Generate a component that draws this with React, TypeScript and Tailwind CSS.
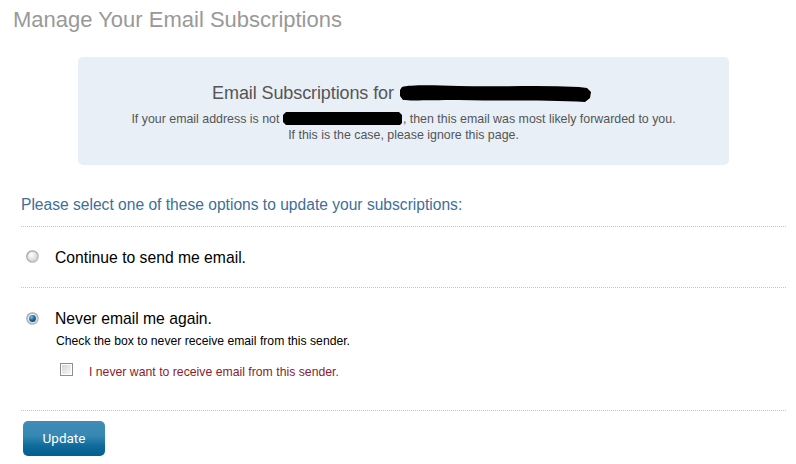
import React from "react";

function Radio({ checked }: { checked?: boolean }) {
  return (
    <svg width="13" height="13" viewBox="0 0 13 13" className="shrink-0">
      <defs>
        <linearGradient id={checked ? "rgc" : "rgu"} x1="0" y1="0" x2="1" y2="1">
          <stop offset="0" stopColor="#949494" />
          <stop offset="1" stopColor="#c4c4c4" />
        </linearGradient>
        <radialGradient id="rin" cx="0.4" cy="0.35" r="0.7">
          <stop offset="0" stopColor="#ffffff" />
          <stop offset="1" stopColor="#cfcfcf" />
        </radialGradient>
        <radialGradient id="rdot" cx="0.35" cy="0.3" r="0.8">
          <stop offset="0" stopColor="#7fc0ea" />
          <stop offset="0.5" stopColor="#1d6fa7" />
          <stop offset="1" stopColor="#0c3f66" />
        </radialGradient>
      </defs>
      <circle cx="6.5" cy="6.5" r="6.3" fill={checked ? "url(#rgc)" : "url(#rgu)"} />
      <circle cx="6.5" cy="6.5" r="5.1" fill="url(#rin)" />
      {checked && <circle cx="6.5" cy="6.5" r="3.4" fill="url(#rdot)" />}
    </svg>
  );
}

function Checkbox() {
  return (
    <svg width="13" height="13" viewBox="0 0 13 13" className="shrink-0">
      <defs>
        <linearGradient id="cbg" x1="0" y1="0" x2="1" y2="1">
          <stop offset="0" stopColor="#d6d6d6" />
          <stop offset="1" stopColor="#f8f8f8" />
        </linearGradient>
      </defs>
      <rect x="0.5" y="0.5" width="12" height="12" fill="#ffffff" stroke="#8e8f8f" />
      <rect x="2" y="2" width="9" height="9" fill="url(#cbg)" />
    </svg>
  );
}

export default function App() {
  return (
    <div className="w-[796px] h-[464px] bg-white font-['Liberation_Sans',Arial,sans-serif] overflow-hidden">
      <h1 className="pl-[13px] pt-[7px] text-[22px] leading-[26px] text-[#999999] font-normal">
        Manage Your Email Subscriptions
      </h1>
      <div className="ml-[21px] mr-[10px]">
        <div className="mx-[57px] mt-[24px] h-[108px] rounded-[5px] bg-[#e8eff7] pt-[24px] text-center text-[#555555]">
          <div className="text-[18px] leading-[22px] flex justify-center items-center">
            <span className="tracking-[-0.1px]">Email Subscriptions for</span>
            <svg width="196" height="20" viewBox="0 0 196 20" className="ml-[5px] mt-[3px]">
              <path
                d="M3 3 C10 1 30 1 60 2 C100 3 140 1 180 3 L188 4 L192 8 L191 14 L186 18 C150 16 100 17 60 16 C30 16 12 17 4 16 L1 12 L1 6 Z"
                fill="#000"
              />
            </svg>
          </div>
          <div className="mt-[7px] text-[12.4px] leading-[16px]">
            <div className="flex justify-center items-center">
              <span className="whitespace-pre">If your email address is not </span>
              <svg width="120" height="15" viewBox="0 0 120 15" className="mt-[-2px]">
                <path d="M3 1 L116 1 L119 4 L119 12 L117 14 L3 14 L0 11 L0 4 Z" fill="#000" />
              </svg>
              <span className="whitespace-pre">, then this email was most likely forwarded to you.</span>
            </div>
            <div>If this is the case, please ignore this page.</div>
          </div>
        </div>

        <div className="mt-[30px] text-[15.6px] leading-[20px] text-[#3d6f98]">
          Please select one of these options to update your subscriptions:
        </div>
        <div className="mt-[11px] border-t border-dotted border-[#c4c4c4]" />

        <div className="mt-[21px] flex items-start pl-[5px]">
          <div className="mt-[2px]">
            <Radio />
          </div>
          <span className="ml-[16px] text-[15.7px] leading-[20px] text-black">Continue to send me email.</span>
        </div>
        <div className="mt-[19px] border-t border-dotted border-[#c4c4c4]" />

        <div className="mt-[21px] flex items-start pl-[5px]">
          <div className="mt-[3px]">
            <Radio checked />
          </div>
          <span className="ml-[16px] text-[15.7px] leading-[20px] text-black">Never email me again.</span>
        </div>
        <div className="mt-[4px] pl-[35px] text-[12.2px] leading-[16px] text-black">
          Check the box to never receive email from this sender.
        </div>
        <div className="mt-[15px] flex items-start pl-[39px]">
          <div className="mt-[-1px]">
            <Checkbox />
          </div>
          <span className="ml-[16px] text-[12.25px] leading-[16px] text-[#8c1b2e]">
            I never want to receive email from this sender.
          </span>
        </div>
        <div className="mt-[30px] border-t border-dotted border-[#c4c4c4]" />

        <button className="ml-[2px] mt-[10px] w-[82px] h-[35px] rounded-[5px] bg-[linear-gradient(to_bottom,#3f8db7_0%,#3788b3_42%,#0e6a9a_72%,#035f8f_100%)] text-white text-[13.5px] font-['Roboto',sans-serif] leading-none">
          Update
        </button>
      </div>
    </div>
  );
}
